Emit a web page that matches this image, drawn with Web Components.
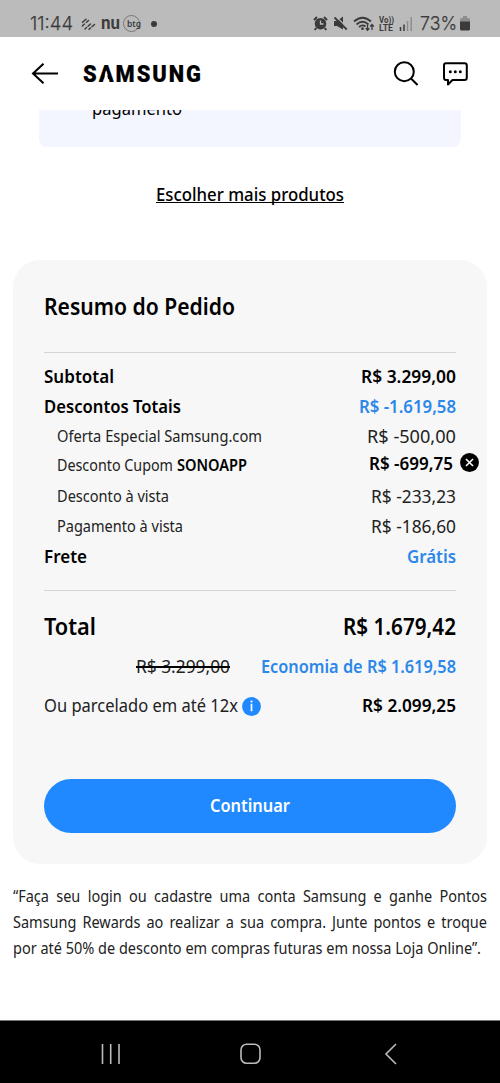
<!DOCTYPE html>
<html lang="pt-BR">
<head>
<meta charset="utf-8">
<meta name="viewport" content="width=device-width">
<title>Resumo do Pedido</title>
<style>
html,body{margin:0;background:#fff}
body{font-family:"Noto Sans","Open Sans",sans-serif;color:#000;width:500px;height:1083px;overflow:hidden}
</style>
</head>
<body>
<checkout-page></checkout-page>
<script>
const define = (name, html, setup) => {
  const template = document.createElement('template');
  template.innerHTML = html;
  customElements.define(name, class extends HTMLElement {
    connectedCallback() {
      if (this.shadowRoot) return;
      this.attachShadow({mode: 'open'}).append(template.content.cloneNode(true));
      if (setup) setup(this, this.shadowRoot);
    }
  });
};

// A single line of text condensed or widened to the given width.
define('fit-text', `
<style>
:host{display:inline-block;flex:none;white-space:nowrap;text-align:left}
span{display:inline-block;transform-origin:0 50%}
</style><span><slot></slot></span>`, (el, root) => {
  const span = root.querySelector('span');
  const w = +el.getAttribute('w');
  span.style.transform = `scaleX(${w / span.getBoundingClientRect().width})`;
  el.style.width = w + 'px';
});

define('status-bar', `
<style>
:host{display:flex;height:37px;background:#bbb;color:#3b3b3b;box-sizing:border-box;padding:10px 30px 0 30px;align-items:center;font-family:Roboto,sans-serif}
.clock,.pct{font:300 19px/26px Inter,sans-serif;-webkit-text-stroke:.25px}
svg{display:block;flex:none}
.nu{font:900 19px/22px Lato,sans-serif;margin:-3px 0 0 5px}
.btg{display:flex;align-items:center;width:15px;height:15px;border:1px solid #777;border-radius:50%;font:600 9.500px/13px "Noto Sans",sans-serif;margin-left:3px}
.btg fit-text{margin:-1px 0 0 3px}
.dot{width:6px;height:6px;border-radius:50%;background:#3b3b3b;margin-left:11px}
.sp{flex:1}
.lte{font:700 9px/8px Roboto,sans-serif;margin:0 5px 0 4px;display:grid}
</style>
<fit-text class="clock" w="43">11:44</fit-text>
<svg width="15" height="14" viewBox="0 0 15 14" style="margin-left:8px" fill="none" stroke="#3b3b3b" stroke-width="1.5" stroke-linecap="round"><path d="M1.500 5.200L5 2.200M1.300 9L3.500 7M5.500 5.300L7.500 3.500M4 12L5.500 10.500M7 9.200L9.500 7M8 12.300L9.500 11M11 9.700L13.500 7.500"/></svg>
<fit-text class="nu" w="19">nu</fit-text>
<div class="btg"><fit-text w="14">btg</fit-text></div>
<div class="dot"></div><div class="sp"></div>
<svg width="15" height="15" viewBox="0 0 15 15"><circle cx="7.500" cy="7.700" r="5.800" fill="#3b3b3b"/><path d="M1 4L4 1M11 1L14 4M3.200 12L1.800 14M11.800 12L13.200 14" stroke="#3b3b3b" stroke-width="2"/><path d="M7.500 4.500V8H10.500" fill="none" stroke="#bbb" stroke-width="1.300"/></svg>
<svg width="15" height="15" viewBox="0 0 15 15" style="margin-left:5px"><path d="M1 5h3l6-4.500v13L4 10H1z" fill="#3b3b3b"/><path d="M2.500 0L15 12.500" stroke="#bbb" stroke-width="1.200"/><path d="M1.500 1.500L13.800 13.500" stroke="#3b3b3b" stroke-width="1.800"/></svg>
<svg width="22" height="16" viewBox="0 0 22 16" style="margin-left:5px" fill="none" stroke="#3b3b3b" stroke-width="1.700"><path d="M1 5.500Q9.500-2 18 5.500M3.500 8.500Q9.500 3 15.500 8.500M6 11Q9.500 8 12.500 10.500"/><circle cx="9.500" cy="12.700" r="1.400" fill="#3b3b3b" stroke="none"/><path d="M14.500 8.500v5.500M12.700 12.200l1.800 2 1.800-2M19 14V8.500M17.200 10.500l1.800-2 1.800 2" stroke-width="1.300"/></svg>
<div class="lte"><fit-text w="15">Vo))</fit-text><fit-text w="14">LTE</fit-text></div>
<svg width="14" height="14" viewBox="0 0 14 14"><path d="M1.500 10v4M5 7.500v6.500" stroke="#3b3b3b" stroke-width="1.500"/><path d="M8.500 4v10M12.200 0v14" stroke="#8e8e8e" stroke-width="1.500"/></svg>
<fit-text class="pct" w="37" style="margin-left:7px">73%</fit-text>
<svg width="10" height="15" viewBox="0 0 10 15" style="margin-left:3px"><path d="M3 0h4v2h1.500q1.500 0 1.500 1.500V6H0V3.500Q0 2 1.500 2H3z" fill="#8e8e8e"/><path d="M0 5.500h10v7.500q0 1.500-1.500 1.500h-7Q0 14.500 0 13z" fill="#3b3b3b"/></svg>
`);

define('brand-mark', `
<style>
:host{display:block;height:26px;font:900 24.500px/26px Roboto,sans-serif;color:#000}
fit-text{letter-spacing:2.200px;display:block;-webkit-text-stroke:.2px #000}
i{font-style:normal;position:relative}
i::after{content:"";position:absolute;left:calc(50% - 4.400px);bottom:5px;width:6.600px;height:12.500px;background:#fff;clip-path:polygon(50% 0,100% 100%,0 100%)}
</style>
<fit-text w="120">S<i>A</i>MSUNG</fit-text>`);

define('app-header', `
<style>
:host{display:flex;align-items:center;height:73px;padding:0 31px;box-sizing:border-box}
svg{display:block;flex:none;fill:none;stroke:#000;stroke-width:2}
brand-mark{margin:1px 0 0 24px;flex:1}
</style>
<svg width="28" height="22" viewBox="0 0 28 22"><path d="M27 10.500H2M12.500 .700L2 10.500L12.500 20.200"/></svg>
<brand-mark></brand-mark>
<svg width="25" height="26" viewBox="0 0 25 26" style="margin-right:24px"><circle cx="11.300" cy="10.700" r="9.500"/><path d="M18 17.500L24.500 24"/></svg>
<svg width="27" height="26" viewBox="0 0 27 26"><path d="M4 2.300H22.500Q24.800 2.300 24.800 4.600V16.500Q24.800 19 22.500 19H10.500L6 23.500V19H4Q2 19 2 16.500V4.600Q2 2.300 4 2.300Z" stroke-linejoin="round"/><g fill="#000" stroke="none"><circle cx="8.300" cy="10.700" r="1.500"/><circle cx="13.300" cy="10.700" r="1.500"/><circle cx="18.300" cy="10.700" r="1.500"/></g></svg>
`);

define('payment-panel', `
<style>
:host{display:block;height:37px;margin:0 39px;background:#f3f6ff;border-radius:0 0 8px 8px;overflow:hidden;font-size:17.500px;line-height:26px}
fit-text{display:block;margin:-15px 0 0 53px}
</style><fit-text w="90">pagamento</fit-text>`);

define('price-row', `
<style>
:host{display:flex;height:30px;line-height:30px;justify-content:space-between;font-size:18.500px;font-weight:560;color:#000}
:host([sub]){font-weight:370;color:#222;padding-left:13px}
:host([sub]) .label{font-size:15.500px}
:host([blue]) .value{color:#2b88ea}
</style><slot name="label"></slot><slot name="value"></slot>`, (el, root) => {
  for (const part of ['label', 'value']) {
    const text = document.createElement('fit-text');
    text.className = part;
    text.setAttribute('w', el.getAttribute(part + '-w'));
    text.textContent = el.getAttribute(part);
    root.querySelector(`slot[name=${part}]`).replaceWith(text);
  }
});

define('remove-button', `
<style>:host{display:block;width:19px;height:19px}svg{display:block}</style>
<svg width="19" height="19" viewBox="0 0 19 19"><circle cx="9.500" cy="9.500" r="9.400"/><path d="M6 6l7 7M13 6l-7 7" stroke="#fff" stroke-width="1.600"/></svg>`);

define('info-badge', `
<style>:host{display:block;width:19px;height:19px}svg{display:block}</style>
<svg width="19" height="19" viewBox="0 0 19 19"><circle cx="9.500" cy="9.500" r="9.400" fill="#2189ff"/><circle cx="9.500" cy="4.500" r="1.100" fill="#fff"/><path d="M9.500 6.700v7.500" stroke="#fff" stroke-width="1.700"/></svg>`);

define('primary-button', `
<style>
:host{display:block}
button{display:grid;place-items:center;width:100%;height:54px;border:0;border-radius:27px;padding:0 0 2px;background:#2189ff;color:#fff;font:560 18px/26px "Noto Sans",sans-serif}
</style><button></button>`, (el, root) => {
  const text = document.createElement('fit-text');
  text.setAttribute('w', 80);
  text.textContent = el.getAttribute('label');
  root.querySelector('button').append(text);
});

define('order-summary', `
<style>
:host{display:block;box-sizing:border-box;margin:0 13px;height:604px;padding:31px 31px 0 31px;border-radius:27px;background:#f7f7f7}
h2{margin:0;font-size:23px;line-height:30px;font-weight:560;height:30px}
.rule{height:1px;background:#d5d5d5}
.r1{margin:31px 0 8px}.r2{margin:19px 0 21px}
.coupon,.line{display:flex;justify-content:space-between;height:30px;line-height:30px;font-size:18.500px}
.coupon{padding-left:13px;margin-right:-23px}
.coupon .l{font-size:15.500px;color:#222;font-weight:370}
.coupon b{font-size:15.500px;font-weight:560}
.cl,.cr,.il{display:flex}
.cl{gap:4px;margin-top:-1px}.cr{gap:7px;align-items:center;margin-top:-7px;font-weight:560}
.total{display:flex;justify-content:space-between;line-height:30px;height:30px;font-weight:560;font-size:22.500px}
.line.save{justify-content:flex-end;gap:31px;margin-top:9px}
s{text-decoration:none;display:block;position:relative;color:#222;font-weight:370}
s::after{content:"";position:absolute;left:0;right:0;top:15px;height:1.500px;background:#000}
.save .eco{color:#2b88ea;font-weight:560}
.inst{margin-top:9px}
.inst .v{font-weight:560}
.il{gap:4px;align-items:center}
.il fit-text{color:#222;font-weight:370}
info-badge{margin-top:2px}
primary-button{margin-top:59px}
</style>
<h2><fit-text w="191">Resumo do Pedido</fit-text></h2>
<div class="rule r1"></div>
<price-row label="Subtotal" label-w="70" value="R$ 3.299,00" value-w="95"></price-row>
<price-row blue label="Descontos Totais" label-w="137" value="R$ -1.619,58" value-w="97"></price-row>
<price-row sub label="Oferta Especial Samsung.com" label-w="205" value="R$ -500,00" value-w="89"></price-row>
<div class="coupon"><div class="cl"><fit-text class="l" w="116">Desconto Cupom</fit-text><b><fit-text w="70">SONOAPP</fit-text></b></div>
<div class="cr"><fit-text w="84">R$ -699,75</fit-text><remove-button></remove-button></div></div>
<price-row sub label="Desconto à vista" label-w="112" value="R$ -233,23" value-w="85"></price-row>
<price-row sub label="Pagamento à vista" label-w="126" value="R$ -186,60" value-w="85"></price-row>
<price-row blue label="Frete" label-w="43" value="Grátis" value-w="49"></price-row>
<div class="rule r2"></div>
<div class="total"><fit-text w="52">Total</fit-text><fit-text w="113">R$ 1.679,42</fit-text></div>
<div class="line save"><s><fit-text w="94">R$ 3.299,00</fit-text></s><fit-text class="eco" w="195">Economia de R$ 1.619,58</fit-text></div>
<div class="line inst"><div class="il"><fit-text w="194">Ou parcelado em até 12x</fit-text><info-badge></info-badge></div><fit-text class="v" w="94">R$ 2.099,25</fit-text></div>
<primary-button label="Continuar"></primary-button>
`);

define('fine-print', `
<style>
:host{display:block;margin:19px 13px 0;height:78px;font-size:15.500px;line-height:26px;color:#222;font-weight:370}
p{margin:0;transform-origin:0 0;white-space:nowrap}
span{display:block;text-align-last:justify}
span.end{display:inline-block;text-align-last:left}
</style>
<p><span>“Faça seu login ou cadastre uma conta Samsung e ganhe Pontos</span><span>Samsung Rewards ao realizar a sua compra. Junte pontos e troque</span><span class="end">por até 50% de desconto em compras futuras em nossa Loja Online”.</span></p>
`, (el, root) => {
  const p = root.querySelector('p');
  const scale = 468 / root.querySelector('.end').getBoundingClientRect().width;
  p.style.width = 474 / scale + 'px';
  p.style.transform = `scaleX(${scale})`;
});

define('system-nav', `
<style>
:host{display:flex;height:63px;box-sizing:border-box;background:#000;border-top:1px solid #777;align-items:center;padding:4px 0 0 101px}
svg{display:block;fill:none;stroke:#bbb;stroke-width:1.600}
</style>
<svg width="20" height="22" viewBox="0 0 20 22"><path d="M1.500 1v20M9.700 1v20M18 1v20"/></svg>
<svg width="22" height="22" viewBox="0 0 22 22" style="margin:0 123px 0 118px"><rect x="2" y="1.300" width="19" height="19" rx="5.500"/></svg>
<svg width="13" height="22" viewBox="0 0 13 22"><path d="M12 1L2 11L12 21"/></svg>
`);

define('checkout-page', `
<style>
:host{display:flex;flex-direction:column;width:500px;height:1083px;background:#fff}
:host>*{flex:none}
a{display:block;align-self:center;margin:34px 0 53px;height:26px;line-height:26px;font-size:18px;font-weight:500;color:#000;position:relative}
a fit-text{margin-top:-1px}
a::after{content:"";position:absolute;left:0;right:0;top:20.500px;height:1.500px;background:#000}
system-nav{margin-top:auto}
</style>
<status-bar></status-bar>
<app-header></app-header>
<payment-panel></payment-panel>
<a><fit-text w="188">Escolher mais produtos</fit-text></a>
<order-summary></order-summary>
<fine-print></fine-print>
<system-nav></system-nav>
`);
</script>
</body>
</html>
